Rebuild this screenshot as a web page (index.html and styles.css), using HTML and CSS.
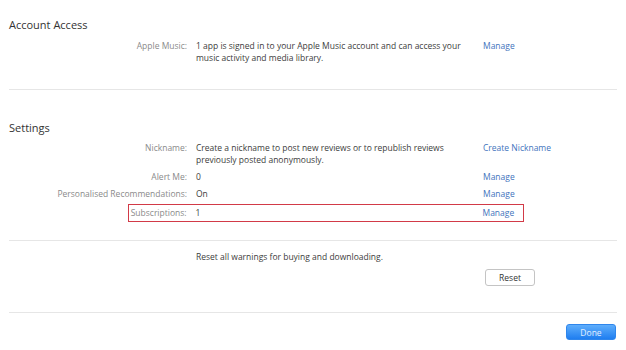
FILE: index.html
```html
<!DOCTYPE html>
<html lang="en">
<head>
  <meta charset="UTF-8" />
  <title>Account Information</title>
  <link rel="stylesheet" href="styles.css">
</head>
<body>
  <div class="page">
    <section class="section first">
      <h2>Account Access</h2>
      <div class="rows">
        <div class="row">
          <span class="label">Apple Music:</span>
          <span class="value">1 app is signed in to your Apple Music account and can access your music activity and media library.</span>
          <a class="link" href="#">Manage</a>
        </div>
      </div>
    </section>

    <section class="section settings">
      <h2>Settings</h2>
      <div class="rows">
        <div class="row">
          <span class="label">Nickname:</span>
          <span class="value">Create a nickname to post new reviews or to republish reviews previously posted anonymously.</span>
          <a class="link" href="#">Create Nickname</a>
        </div>
        <div class="row">
          <span class="label">Alert Me:</span>
          <span class="value">0</span>
          <a class="link" href="#">Manage</a>
        </div>
        <div class="row">
          <span class="label">Personalised Recommendations:</span>
          <span class="value">On</span>
          <a class="link" href="#">Manage</a>
        </div>
        <div class="row highlight">
          <span class="label">Subscriptions:</span>
          <span class="value">1</span>
          <a class="link" href="#">Manage</a>
        </div>
      </div>
    </section>

    <section class="section reset">
      <div class="row">
        <span class="label"></span>
        <span class="value">Reset all warnings for buying and downloading.</span>
        <span class="link"><button class="btn">Reset</button></span>
      </div>
    </section>

    <div class="footer">
      <button class="btn primary">Done</button>
    </div>
  </div>
</body>
</html>
```

FILE: styles.css
```css
body {
  margin: 0;
  background: #fff;
  font-family: 'Open Sans', sans-serif;
  font-size: 8.5px;
  color: #444;
}

.page {
  padding: 0 9px;
}

.section {
  border-bottom: 1px solid #e6e6e6;
}

.section h2 {
  margin: 0;
  font-size: 11px;
  font-weight: normal;
  color: #333;
  line-height: 14px;
}

.first {
  padding-top: 18px;
  height: 71px;
}

.first .rows {
  margin-top: 8px;
}

.settings {
  padding-top: 31px;
  height: 119px;
}

.settings .rows {
  margin-top: 7px;
}

.rows {
  display: flex;
  flex-direction: column;
  gap: 5px;
}

.row {
  display: grid;
  grid-template-columns: 178px 278px auto;
  column-gap: 9px;
  line-height: 12px;
}

.label {
  text-align: right;
  color: #8a8a8a;
}

.value {
  color: #3d3d3d;
}

.link {
  color: #3f74bd;
  text-decoration: none;
}

.highlight {
  border: 1.5px solid #d23a47;
  margin-left: 119px;
  width: 394px;
  grid-template-columns: 57.5px 278px auto;
  padding: 2px 0;
  margin-top: -1px;
}

.reset {
  height: 71px;
}

.reset .row {
  padding-top: 10px;
}

.reset .link {
  padding: 18px 0 0 2px;
}

.btn {
  font-family: 'Open Sans', sans-serif;
  font-size: 8.5px;
  width: 50px;
  height: 17px;
  padding: 0;
  border: 1px solid #c4c4c4;
  border-radius: 3px;
  background: #fff;
  color: #333;
}

.footer {
  display: flex;
  justify-content: flex-end;
  padding: 11px 1px 0 0;
}

.primary {
  height: 16px;
  border: 1px solid #2f86ec;
  background: linear-gradient(#5eaefc, #1f7ef0);
  color: #e3efff;
}
```
